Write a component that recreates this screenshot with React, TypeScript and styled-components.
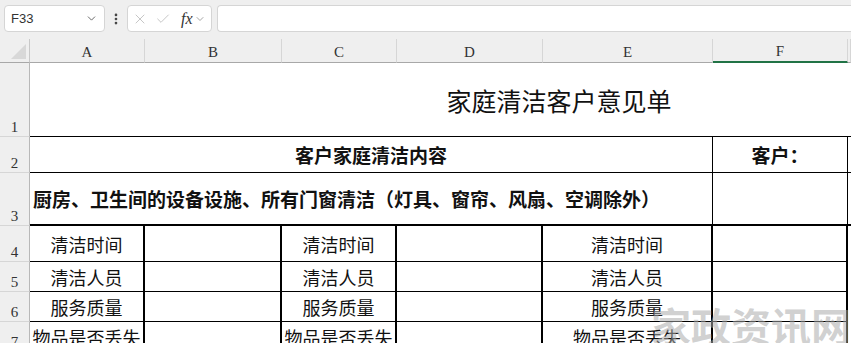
import React from 'react';
import styled, { createGlobalStyle } from 'styled-components';
import { ChevronDown, X, Check, EllipsisVertical } from 'lucide-react';

const GlobalStyle = createGlobalStyle`
  html, body {
    margin: 0;
    padding: 0;
    background: #ffffff;
    overflow: hidden;
  }
  body {
    font-family: "Noto Sans CJK SC", "Noto Sans", sans-serif;
  }
`;

const Page = styled.div`
  position: relative;
  width: 851px;
  height: 343px;
  overflow: hidden;
  background: #ffffff;
`;

const Toolbar = styled.div`
  height: 39px;
  box-sizing: border-box;
  background: #efefef;
  display: flex;
  align-items: flex-start;
  padding: 5px 0 0 4px;
`;

const Box = styled.div`
  height: 27px;
  box-sizing: border-box;
  background: #ffffff;
  border: 1px solid #d5d5d5;
  border-radius: 4px;
  display: flex;
  align-items: center;
`;

const NameBox = styled(Box)`
  width: 101px;
  padding: 0 6px;
  justify-content: space-between;
  font-family: "Liberation Sans", Arial, sans-serif;
  font-size: 13px;
  color: #333333;
  svg {
    color: #555555;
  }
`;

const Kebab = styled.div`
  width: 22px;
  height: 27px;
  display: flex;
  align-items: center;
  justify-content: center;
  color: #444444;
`;

const FormulaTools = styled(Box)`
  width: 85px;
  padding: 0 2px 0 4px;
  gap: 7px;
  color: #b8b8b8;
`;

const Fx = styled.span`
  font-family: "Liberation Serif", "Times New Roman", serif;
  font-style: italic;
  font-size: 16px;
  color: #333333;
  margin-left: 3px;
`;

const FxArrow = styled.span`
  display: flex;
  margin-left: -6px;
  color: #888888;
`;

const FormulaInput = styled(Box)`
  flex: 1;
  margin-left: 5px;
  border-right: none;
  border-radius: 4px 0 0 4px;
`;

const Sheet = styled.div`
  display: grid;
  grid-template-columns: 30px 115px 137px 115px 146px 170px 135px 1fr;
  grid-template-rows: 24px 74px 36px 53px 36px 30px 30px 30px;
  color: #111111;
`;

const Corner = styled.div`
  background: #efefef;
  border-right: 1px solid #c8c8c8;
  border-bottom: 1px solid #a8a8a8;
  position: relative;
  &::after {
    content: '';
    position: absolute;
    right: 3px;
    bottom: 3px;
    width: 0;
    height: 0;
    border-left: 15px solid transparent;
    border-bottom: 15px solid #d8d8d8;
  }
`;

const ColHead = styled.div<{ $selected?: boolean }>`
  background: #efefef;
  box-sizing: border-box;
  border-right: 1px solid #d6d6d6;
  border-bottom: ${p => (p.$selected ? '2px solid #217346' : '1px solid #a8a8a8')};
  display: flex;
  align-items: center;
  justify-content: center;
  padding-top: 3px;
  font-family: "Liberation Serif", "Times New Roman", serif;
  font-size: 15px;
  color: #333333;
`;

const RowHead = styled.div`
  background: #efefef;
  box-sizing: border-box;
  border-right: 1px solid #b8b8b8;
  border-bottom: 1px solid #d6d6d6;
  display: flex;
  align-items: flex-end;
  justify-content: center;
  padding-bottom: 0;
  font-family: "Liberation Serif", "Times New Roman", serif;
  font-size: 15px;
  color: #333333;
`;

const Cell = styled.div<{
  $span?: number;
  $r?: number;
  $b?: number;
  $bold?: boolean;
  $align?: 'left' | 'center';
  $size?: number;
  $padLeft?: number;
}>`
  grid-column: span ${p => p.$span ?? 1};
  box-sizing: border-box;
  border-right: ${p => (p.$r ? `${p.$r}px solid #000` : 'none')};
  border-bottom: ${p => (p.$b ? `${p.$b}px solid #000` : 'none')};
  display: flex;
  align-items: center;
  justify-content: ${p => (p.$align === 'left' ? 'flex-start' : 'center')};
  padding-left: ${p => p.$padLeft ?? 0}px;
  font-size: ${p => p.$size ?? 18}px;
  font-weight: ${p => (p.$bold ? 700 : 400)};
  white-space: nowrap;
  color: #111111;
`;

const Watermark = styled.div`
  position: absolute;
  right: 0;
  bottom: -11px;
  font-family: "Noto Sans CJK SC", sans-serif;
  font-weight: 700;
  font-size: 40px;
  color: rgba(170, 170, 170, 0.55);
  pointer-events: none;
`;

const columns = ['A', 'B', 'C', 'D', 'E', 'F', 'G'];
const labels = ['清洁时间', '清洁人员', '服务质量', '物品是否丢失'];

export default function App() {
  return (
    <Page>
      <GlobalStyle />
      <Toolbar>
        <NameBox>
          <span>F33</span>
          <ChevronDown size={13} strokeWidth={1.6} />
        </NameBox>
        <Kebab>
          <EllipsisVertical size={14} strokeWidth={2.6} />
        </Kebab>
        <FormulaTools>
          <X size={16} strokeWidth={1.2} />
          <Check size={16} strokeWidth={1.2} />
          <Fx>fx</Fx>
          <FxArrow>
            <ChevronDown size={12} strokeWidth={1.5} />
          </FxArrow>
        </FormulaTools>
        <FormulaInput />
      </Toolbar>

      <Sheet>
        <Corner />
        {columns.map(c => (
          <ColHead key={c} $selected={c === 'F'}>
            {c === 'G' ? '' : c}
          </ColHead>
        ))}

        <RowHead>1</RowHead>
        <Cell $span={7} $b={1} $size={25} $padLeft={237}>
          家庭清洁客户意见单
        </Cell>

        <RowHead>2</RowHead>
        <Cell $span={5} $r={1} $b={1} $bold $size={19}>
          客户家庭清洁内容
        </Cell>
        <Cell $r={1} $b={1} $bold $size={19}>
          客户：
        </Cell>
        <Cell $b={1} />

        <RowHead>3</RowHead>
        <Cell $span={5} $r={1} $b={2} $bold $size={19} $align="left" $padLeft={3}>
          厨房、卫生间的设备设施、所有门窗清洁（灯具、窗帘、风扇、空调除外）
        </Cell>
        <Cell $r={1} $b={2} />
        <Cell $b={2} />

        {labels.map((label, i) => (
          <React.Fragment key={label}>
            <RowHead>{i + 4}</RowHead>
            <Cell $r={2} $b={1}>{label}</Cell>
            <Cell $r={2} $b={1} />
            <Cell $r={2} $b={1}>{label}</Cell>
            <Cell $r={2} $b={1} />
            <Cell $r={2} $b={1}>{label}</Cell>
            <Cell $r={2} $b={1} />
            <Cell />
          </React.Fragment>
        ))}
      </Sheet>

      <Watermark>家政资讯网</Watermark>
    </Page>
  );
}
